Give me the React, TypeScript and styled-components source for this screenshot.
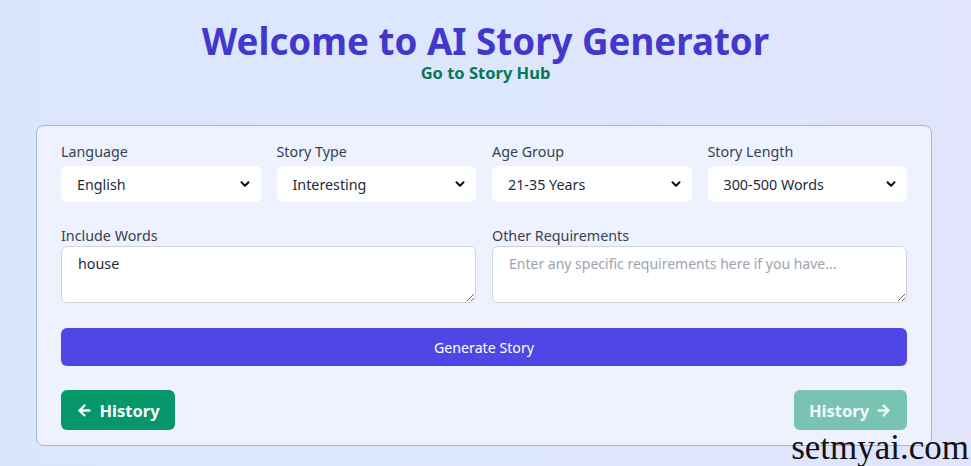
import React from "react";
import styled, { createGlobalStyle } from "styled-components";
import { ArrowLeft, ArrowRight, ChevronDown } from "lucide-react";

const Global = createGlobalStyle`
  html, body { margin: 0; padding: 0; }
  body {
    font-family: "Noto Sans", "Open Sans", sans-serif;
    background: linear-gradient(90deg, #dbe6fd 0%, #dde6fd 60%, #e1e4fb 100%);
    min-height: 466px;
  }
  * { box-sizing: border-box; }
`;

const Page = styled.div`
  position: relative;
  width: 971px;
  height: 466px;
  overflow: hidden;
  padding: 19px 36px 0 36px;
  display: flex;
  flex-direction: column;
  align-items: center;
`;

const Title = styled.h1`
  margin: 0;
  font-size: 36.7px;
  line-height: 44px;
  font-weight: 700;
  color: #4338ca;
`;

const HubLink = styled.a`
  font-size: 16.5px;
  line-height: 20px;
  font-weight: 700;
  color: #047857;
  text-decoration: none;
`;

const Card = styled.div`
  align-self: flex-start;
  margin-top: 42px;
  width: 896px;
  background: #eef2fe;
  border: 1px solid #a9b5cc;
  border-radius: 8px;
  padding: 16px 24px 15px 24px;
  display: flex;
  flex-direction: column;
`;

const Grid = styled.div<{ $cols: number; $top?: number }>`
  display: grid;
  grid-template-columns: repeat(${(p) => p.$cols}, 1fr);
  column-gap: 16px;
  margin-top: ${(p) => p.$top ?? 0}px;
`;

const Field = styled.div`
  display: flex;
  flex-direction: column;
`;

const Label = styled.label<{ $gap: number }>`
  font-size: 14.3px;
  line-height: 20px;
  color: #374151;
  margin-bottom: ${(p) => p.$gap}px;
`;

const SelectWrap = styled.div`
  position: relative;
  height: 36px;
`;

const Select = styled.select`
  appearance: none;
  -webkit-appearance: none;
  width: 100%;
  height: 36px;
  border: none;
  border-radius: 6px;
  background: #ffffff;
  padding: 0 30px 0 16px;
  font-family: inherit;
  font-size: 14.3px;
  color: #1f2937;
  outline: none;
`;

const Chevron = styled.span`
  position: absolute;
  right: 9px;
  top: 11px;
  display: flex;
  color: #111;
  pointer-events: none;
`;

const TextArea = styled.textarea`
  width: 100%;
  height: 57px;
  border: 1px solid #d1d5db;
  border-radius: 6px;
  background: #fff;
  padding: 7px 16px;
  font-family: inherit;
  font-size: 14.3px;
  color: #1f2937;
  outline: none;
  &::placeholder { color: #9ca3af; font-size: 14px; }
`;

const GenerateButton = styled.button`
  margin-top: 25px;
  height: 38px;
  width: 100%;
  border: none;
  border-radius: 6px;
  background: #4f46e5;
  color: #fff;
  font-family: inherit;
  font-size: 14.2px;
`;

const NavRow = styled.div`
  margin-top: 24px;
  display: flex;
  justify-content: space-between;
`;

const NavButton = styled.button<{ $faded?: boolean }>`
  height: 40px;
  width: ${(p) => (p.$faded ? "113px" : "114px")};
  border: none;
  border-radius: 6px;
  background: #059669;
  opacity: ${(p) => (p.$faded ? 0.5 : 1)};
  color: #fff;
  font-family: inherit;
  font-size: 16.5px;
  font-weight: 700;
  display: flex;
  align-items: center;
  justify-content: center;
  gap: 6px;
`;

const Watermark = styled.div`
  position: absolute;
  right: 2px;
  bottom: -3px;
  font-family: "Liberation Serif", "Times New Roman", serif;
  font-size: 35px;
  line-height: 42px;
  color: #111;
`;

const selects = [
  { label: "Language", value: "English" },
  { label: "Story Type", value: "Interesting" },
  { label: "Age Group", value: "21-35 Years" },
  { label: "Story Length", value: "300-500 Words" },
];

export default function App() {
  return (
    <>
      <Global />
      <Page>
        <Title>Welcome to AI Story Generator</Title>
        <HubLink href="#">Go to Story Hub</HubLink>
        <Card>
          <Grid $cols={4}>
            {selects.map((s) => (
              <Field key={s.label}>
                <Label $gap={4}>{s.label}</Label>
                <SelectWrap>
                  <Select defaultValue={s.value}>
                    <option>{s.value}</option>
                  </Select>
                  <Chevron>
                    <ChevronDown size={14} strokeWidth={3.5} />
                  </Chevron>
                </SelectWrap>
              </Field>
            ))}
          </Grid>
          <Grid $cols={2} $top={24}>
            <Field>
              <Label $gap={0}>Include Words</Label>
              <TextArea defaultValue="house" />
            </Field>
            <Field>
              <Label $gap={0}>Other Requirements</Label>
              <TextArea placeholder="Enter any specific requirements here if you have..." />
            </Field>
          </Grid>
          <GenerateButton>Generate Story</GenerateButton>
          <NavRow>
            <NavButton>
              <ArrowLeft size={17} strokeWidth={3.2} />
              History
            </NavButton>
            <NavButton $faded>
              History
              <ArrowRight size={17} strokeWidth={3.2} />
            </NavButton>
          </NavRow>
        </Card>
        <Watermark>setmyai.com</Watermark>
      </Page>
    </>
  );
}
